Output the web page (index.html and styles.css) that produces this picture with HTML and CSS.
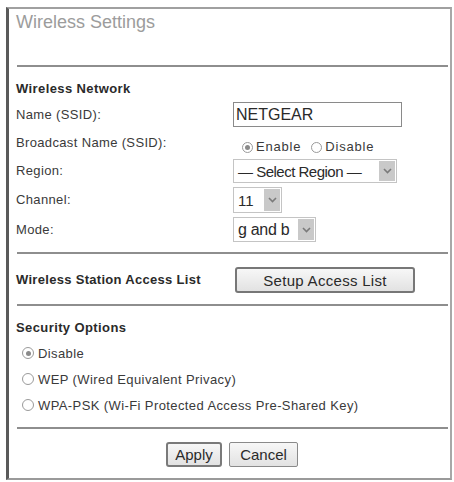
FILE: index.html
```html
<!DOCTYPE html>
<html>
<head>
<meta charset="utf-8">
<link rel="stylesheet" href="styles.css">
</head>
<body>
<div class="frame">
  <div class="title">Wireless Settings</div>
  <div class="rule"></div>
  <div class="heading">Wireless Network</div>
  <div class="form">
    <div class="row">
      <span class="label">Name (SSID):</span>
      <span class="input">NETGEAR</span>
    </div>
    <div class="row">
      <span class="label">Broadcast Name (SSID):</span>
      <span class="radios">
        <span class="opt"><span class="radio on"></span>Enable</span>
        <span class="opt"><span class="radio"></span>Disable</span>
      </span>
    </div>
    <div class="row">
      <span class="label">Region:</span>
      <span class="select region"><span class="val">— Select Region —</span><span class="arrow"><svg width="9" height="6" viewBox="0 0 9 6"><path d="M1 1 L4.5 4.5 L8 1" fill="none" stroke="#7a7a7a" stroke-width="1.6"/></svg></span></span>
    </div>
    <div class="row">
      <span class="label">Channel:</span>
      <span class="select channel"><span class="val">11</span><span class="arrow"><svg width="9" height="6" viewBox="0 0 9 6"><path d="M1 1 L4.5 4.5 L8 1" fill="none" stroke="#7a7a7a" stroke-width="1.6"/></svg></span></span>
    </div>
    <div class="row">
      <span class="label">Mode:</span>
      <span class="select mode"><span class="val">g and b</span><span class="arrow"><svg width="9" height="6" viewBox="0 0 9 6"><path d="M1 1 L4.5 4.5 L8 1" fill="none" stroke="#7a7a7a" stroke-width="1.6"/></svg></span></span>
    </div>
  </div>
  <div class="rule r2"></div>
  <div class="station">
    <span class="label bold">Wireless Station Access List</span>
    <span class="btn setup">Setup Access List</span>
  </div>
  <div class="rule r3"></div>
  <div class="heading">Security Options</div>
  <div class="security">
    <div class="sopt"><span class="radio on"></span>Disable</div>
    <div class="sopt"><span class="radio"></span>WEP (Wired Equivalent Privacy)</div>
    <div class="sopt"><span class="radio"></span>WPA-PSK (Wi-Fi Protected Access Pre-Shared Key)</div>
  </div>
  <div class="rule r4"></div>
  <div class="actions">
    <span class="btn apply">Apply</span>
    <span class="btn cancel">Cancel</span>
  </div>
</div>
</body>
</html>
```

FILE: styles.css
```css
html, body {
  margin: 0;
  padding: 0;
  background: #ffffff;
}
body {
  font-family: "Liberation Sans", Arial, sans-serif;
  color: #333333;
}
.frame {
  margin: 7px 2px 0 6px;
  border-left: 3px solid #5a5a5a;
  border-top: 2px solid #a0a0a0;
  border-right: 2px solid #a8a8a8;
  border-bottom: 2px solid #9a9a9a;
  padding: 0 2px 11px 7px;
  box-sizing: border-box;
  height: 473px;
}
.title {
  height: 56px;
  box-sizing: border-box;
  padding-top: 3px;
  font-size: 18px;
  line-height: 21px;
  color: #9c9c9c;
}
.rule {
  height: 2px;
  background: #8e8e8e;
  margin-left: 1px;
}
.heading {
  margin-top: 14px;
  font-size: 13px;
  line-height: 16px;
  font-weight: bold;
  letter-spacing: 0.4px;
  color: #2a2a2a;
}
.form {
  margin-top: 5px;
  display: flex;
  flex-direction: column;
  gap: 4px;
}
.row {
  display: flex;
  align-items: center;
  min-height: 24px;
}
.label {
  width: 217px;
  flex: none;
  font-size: 13px;
  line-height: 16px;
  letter-spacing: 0.35px;
  color: #3a3a3a;
}
.label.bold {
  font-weight: bold;
  color: #2a2a2a;
  letter-spacing: 0.3px;
}
.input {
  width: 169px;
  height: 25px;
  box-sizing: border-box;
  border: 1px solid #8a8a8a;
  padding-left: 2px;
  font-size: 16px;
  line-height: 23px;
  color: #2a2a2a;
}
.radios {
  display: flex;
  margin-top: 8px;
  margin-left: 9px;
  gap: 10px;
}
.opt {
  display: flex;
  align-items: center;
  gap: 3px;
  font-size: 13px;
  line-height: 16px;
  letter-spacing: 0.8px;
  color: #3a3a3a;
}
.radio {
  width: 11px;
  height: 11px;
  box-sizing: border-box;
  border: 1px solid #9a9a9a;
  border-radius: 50%;
  background: #fff;
  display: flex;
  align-items: center;
  justify-content: center;
  flex: none;
}
.radio.on::after {
  content: "";
  width: 5px;
  height: 5px;
  border-radius: 50%;
  background: #8a8a8a;
}
.select {
  display: flex;
  box-sizing: border-box;
  border: 1px solid #c4c4c4;
  padding: 1px;
  font-size: 15px;
  color: #2a2a2a;
}
.select .val {
  flex: 1;
  padding-left: 3px;
  display: flex;
  align-items: center;
  white-space: nowrap;
}
.select .arrow {
  width: 16px;
  flex: none;
  background: #c9c9c9;
  display: flex;
  align-items: center;
  justify-content: center;
}
.region {
  width: 164px;
  height: 24px;
  letter-spacing: -0.5px;
}
.channel {
  width: 49px;
  height: 26px;
}
.mode {
  width: 83px;
  height: 25px;
  font-size: 16px;
  letter-spacing: -0.3px;
}
.r2 {
  margin-top: 10px;
}
.station {
  margin-top: 13px;
  display: flex;
  align-items: center;
}
.btn {
  display: flex;
  align-items: center;
  justify-content: center;
  box-sizing: border-box;
  border: 1px solid #6e6e6e;
  border-radius: 3px;
  background: linear-gradient(#f7f7f7, #e2e2e2);
  font-size: 15px;
  color: #2a2a2a;
}
.setup {
  margin-left: 2px;
  width: 180px;
  height: 26px;
  border: 2px solid #777;
  letter-spacing: 0.3px;
}
.r3 {
  margin-top: 11px;
}
.security {
  margin-top: 4px;
  display: flex;
  flex-direction: column;
}
.sopt {
  height: 26px;
  display: flex;
  align-items: center;
  gap: 4px;
  padding-left: 6px;
  font-size: 13px;
  letter-spacing: 0.4px;
  color: #3a3a3a;
}
.sopt .radio {
  width: 12px;
  height: 12px;
}
.r4 {
  margin-top: 9px;
}
.actions {
  margin-top: 13px;
  display: flex;
  justify-content: center;
  gap: 7px;
}
.apply {
  width: 56px;
  height: 25px;
  border: 2px solid #7a7a7a;
}
.cancel {
  width: 69px;
  height: 25px;
  border: 1px solid #8a8a8a;
  border-radius: 2px;
}
```
